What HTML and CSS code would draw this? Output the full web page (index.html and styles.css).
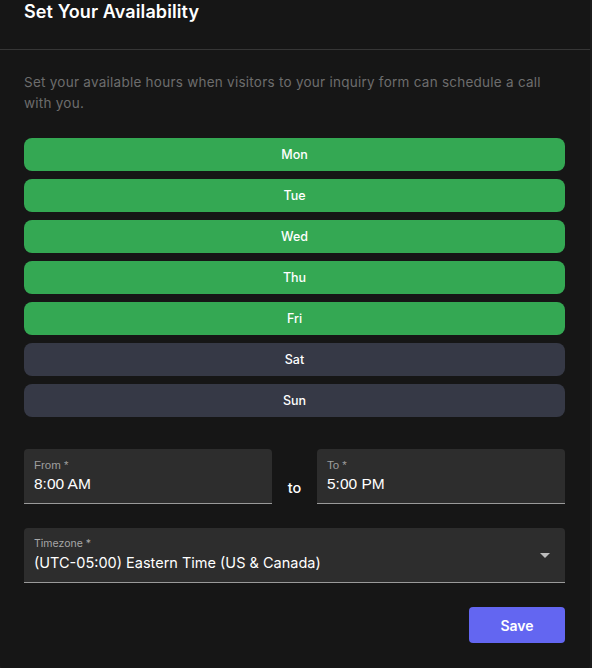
FILE: index.html
```html
<!DOCTYPE html>
<html>
<head>
<meta charset="utf-8">
<link rel="stylesheet" href="styles.css">
</head>
<body>
<div class="dialog">
  <div class="header"><h1 class="title">Set Your Availability</h1></div>
  <div class="content">
    <p class="desc">Set your available hours when visitors to your inquiry form can schedule a call with you.</p>
    <div class="days">
      <button class="day on">Mon</button>
      <button class="day on">Tue</button>
      <button class="day on">Wed</button>
      <button class="day on">Thu</button>
      <button class="day on">Fri</button>
      <button class="day off">Sat</button>
      <button class="day off">Sun</button>
    </div>
    <div class="times">
      <div class="field">
        <span class="label">From *</span>
        <span class="value">8:00 AM</span>
      </div>
      <span class="to">to</span>
      <div class="field">
        <span class="label">To *</span>
        <span class="value">5:00 PM</span>
      </div>
    </div>
    <div class="field select">
      <div class="select-text">
        <span class="label tz">Timezone *</span>
        <span class="value tzv">(UTC-05:00) Eastern Time (US &amp; Canada)</span>
      </div>
      <svg class="arrow" width="10" height="5" viewBox="0 0 10 5"><path d="M0 0 L10 0 L5 5 Z" fill="#bdbdbd"/></svg>
    </div>
    <div class="actions"><button class="save">Save</button></div>
  </div>
</div>
</body>
</html>
```

FILE: styles.css
```css
html, body {
  margin: 0;
  padding: 0;
  background: #1c1c1c;
  height: 668px;
  overflow: hidden;
}
body {
  font-family: "Inter", "Noto Sans", sans-serif;
}
.dialog {
  width: 590px;
  height: 670px;
  background: #161616;
  border-radius: 0 0 6px 6px;
  box-sizing: border-box;
}
.header {
  height: 49px;
  border-bottom: 1px solid #363636;
  padding: 0 24px;
  box-sizing: content-box;
}
.title {
  margin: 0;
  padding-top: 1px;
  font-size: 18px;
  line-height: 22px;
  font-weight: 600;
  color: #ffffff;
  letter-spacing: 0.1px;
}
.content {
  padding: 22px 25px 0 24px;
}
.desc {
  margin: 0;
  font-size: 13.5px;
  line-height: 21px;
  color: #6d6d6d;
  letter-spacing: 0.25px;
}
.days {
  display: flex;
  flex-direction: column;
  gap: 8px;
  margin-top: 24px;
}
.day {
  height: 33px;
  border: none;
  border-radius: 8px;
  color: #fff;
  font-family: "Inter", sans-serif;
  font-size: 12.5px;
  font-weight: 500;
  padding: 0;
}
.day.on { background: #34a853; }
.day.off { background: #363946; }
.times {
  display: flex;
  align-items: flex-end;
  margin-top: 32px;
}
.field {
  background: #2d2d2d;
  border-radius: 4px 4px 0 0;
  border-bottom: 1px solid #9a9a9a;
  height: 54px;
  box-sizing: content-box;
  display: flex;
  flex-direction: column;
  padding: 0 10px;
}
.times .field { width: 228px; }
.label {
  font-family: "Liberation Sans", Arial, sans-serif;
  font-size: 11.5px;
  color: #9e9e9e;
  margin-top: 9px;
  line-height: 14px;
}
.value {
  font-family: "Liberation Sans", Arial, sans-serif;
  font-size: 15.5px;
  color: #ffffff;
  margin-top: 2px;
  line-height: 20px;
}
.to {
  width: 45px;
  text-align: center;
  color: #fff;
  font-size: 14.5px;
  font-weight: 500;
  padding-bottom: 8px;
}
.select {
  margin-top: 24px;
  flex-direction: row;
  align-items: center;
  justify-content: space-between;
}
.select-text {
  display: flex;
  flex-direction: column;
  align-self: flex-start;
}
.tz {
  font-family: "Inter", sans-serif;
  font-size: 10.5px;
  color: #a8a8a8;
  margin-top: 9px;
}
.tzv {
  font-family: "Inter", sans-serif;
  font-size: 14.5px;
  margin-top: 2px;
}
.arrow { margin-right: 5px; margin-top: 1px; }
.actions {
  display: flex;
  justify-content: flex-end;
  margin-top: 24px;
}
.save {
  width: 96px;
  height: 36px;
  border: none;
  border-radius: 4px;
  background: #6366f1;
  color: #fff;
  font-family: "Inter", sans-serif;
  font-size: 14px;
  font-weight: 600;
}
```
